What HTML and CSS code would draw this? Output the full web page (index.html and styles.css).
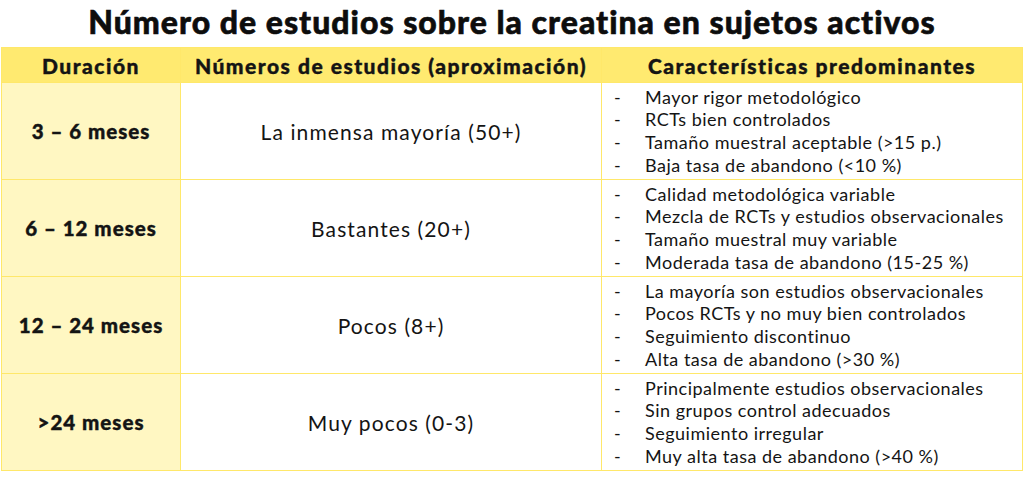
FILE: index.html
```html
<!DOCTYPE html>
<html lang="es">
<head>
<meta charset="utf-8">
<link rel="stylesheet" href="styles.css">
</head>
<body>
<h1 class="title">Número de estudios sobre la creatina en sujetos activos</h1>
<table class="grid">
  <thead>
    <tr>
      <th class="c1">Duración</th>
      <th class="c2">Números de estudios (aproximación)</th>
      <th class="c3">Características predominantes</th>
    </tr>
  </thead>
  <tbody>
    <tr>
      <td class="dur">3 – 6 meses</td>
      <td class="num">La inmensa mayoría (50+)</td>
      <td class="feat"><ul><li>Mayor rigor metodológico</li><li>RCTs bien controlados</li><li>Tamaño muestral aceptable (&gt;15 p.)</li><li>Baja tasa de abandono (&lt;10 %)</li></ul></td>
    </tr>
    <tr>
      <td class="dur">6 – 12 meses</td>
      <td class="num">Bastantes (20+)</td>
      <td class="feat"><ul><li>Calidad metodológica variable</li><li>Mezcla de RCTs y estudios observacionales</li><li>Tamaño muestral muy variable</li><li>Moderada tasa de abandono (15-25 %)</li></ul></td>
    </tr>
    <tr>
      <td class="dur">12 – 24 meses</td>
      <td class="num">Pocos (8+)</td>
      <td class="feat"><ul><li>La mayoría son estudios observacionales</li><li>Pocos RCTs y no muy bien controlados</li><li>Seguimiento discontinuo</li><li>Alta tasa de abandono (&gt;30 %)</li></ul></td>
    </tr>
    <tr>
      <td class="dur">&gt;24 meses</td>
      <td class="num">Muy pocos (0-3)</td>
      <td class="feat"><ul><li>Principalmente estudios observacionales</li><li>Sin grupos control adecuados</li><li>Seguimiento irregular</li><li>Muy alta tasa de abandono (&gt;40 %)</li></ul></td>
    </tr>
  </tbody>
</table>
</body>
</html>
```
FILE: styles.css
```css
html, body {
  margin: 0;
  padding: 0;
  background: #ffffff;
}
body {
  font-family: Lato, "Liberation Sans", sans-serif;
  color: #141414;
  width: 1024px;
}
.title {
  margin: 0;
  height: 47px;
  line-height: 44px;
  font-size: 32px;
  font-weight: 900;
  letter-spacing: 1px;
  -webkit-text-stroke: 0.6px #0d0d0d;
  text-align: center;
  color: #0d0d0d;
}
.grid {
  margin-left: 1px;
  width: 1022px;
  border-collapse: collapse;
  table-layout: fixed;
}
.grid th, .grid td {
  border: 1px solid #ffe86a;
  padding: 0;
}
.grid th {
  background: #ffea70;
  height: 34px;
  font-size: 21px;
  font-weight: 900;
  letter-spacing: 1.5px;
  -webkit-text-stroke: 0.4px #141414;
  text-align: center;
  vertical-align: middle;
}
.c1 { width: 178px; }
.c2 { width: 420px; }
.c3 { width: auto; }
.grid td {
  height: 96px;
  vertical-align: middle;
}
.dur {
  background: #fff7c2;
  text-align: center;
  font-weight: 900;
  font-size: 20.5px;
  letter-spacing: 1px;
  -webkit-text-stroke: 0.4px #141414;
}
.num {
  text-align: center;
  font-size: 21px;
  letter-spacing: 1.1px;
}
.feat ul {
  list-style: none;
  margin: 0;
  padding: 0 0 0 12px;
  font-size: 18px;
  letter-spacing: 0.5px;
  line-height: 22.6px;
}
.feat li {
  display: flex;
}
.feat li::before {
  content: "-";
  width: 31px;
  flex: none;
}
```
